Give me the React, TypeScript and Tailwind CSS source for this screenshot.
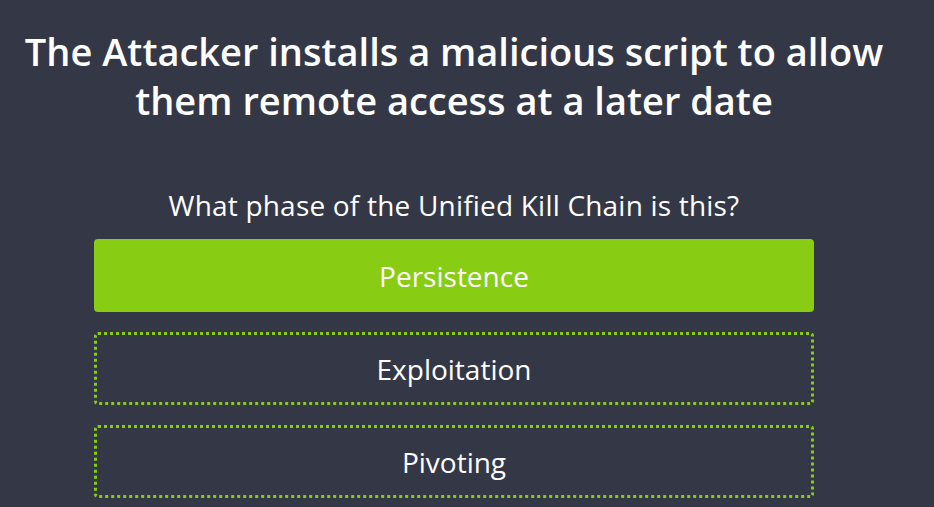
import React from 'react';

const options = ['Persistence', 'Exploitation', 'Pivoting'];

export default function App() {
    return (
        <div
            className="min-h-[507px] w-full bg-[#343846] text-white overflow-hidden"
            style={{ fontFamily: '"Open Sans", "Noto Sans", sans-serif' }}
        >
            <div className="w-[908px] flex flex-col items-center">
                <h1 className="mt-[27px] px-[20px] text-center text-[38px] leading-[49px] font-semibold">
                    The Attacker installs a malicious script to allow them remote access at a later date
                </h1>
                <p className="mt-[62px] text-[28px] leading-[36px] tracking-[0.2px]">
                    What phase of the Unified Kill Chain is this?
                </p>
                <div className="mt-[16px] w-[720px] flex flex-col gap-[20px]">
                    {options.map((opt, i) => (
                        <div
                            key={opt}
                            className={
                                i === 0
                                    ? 'h-[73px] rounded-[4px] bg-[#88cc14] flex items-center justify-center text-[28px]'
                                    : 'h-[73px] rounded-[4px] border-[3px] border-dotted border-[#88cc14] flex items-center justify-center text-[28px]'
                            }
                        >
                            {opt}
                        </div>
                    ))}
                </div>
            </div>
        </div>
    );
}
